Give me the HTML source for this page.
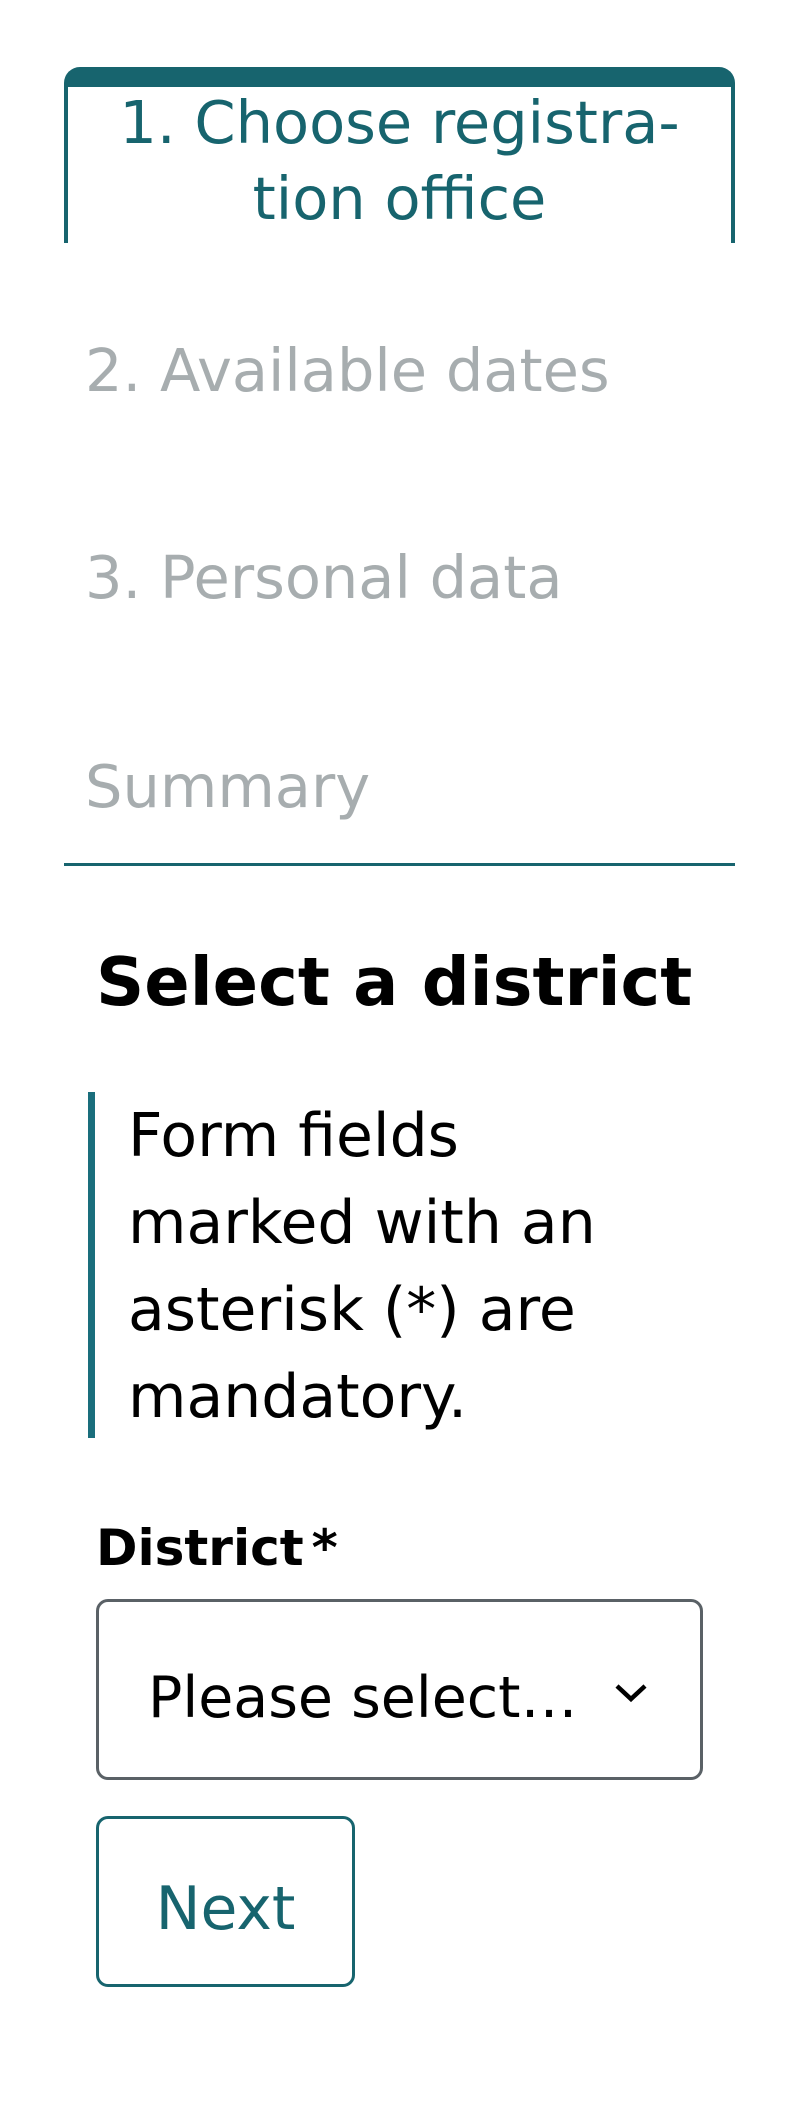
<!DOCTYPE html>
<html><head><meta charset="utf-8"><style>
*{margin:0;padding:0;box-sizing:border-box}
html,body{width:800px;height:2103px;background:#fff;overflow:hidden}
body{font-family:"DejaVu Sans","Liberation Sans",sans-serif;position:relative}
.a{position:absolute;white-space:nowrap}
.tab{position:absolute;left:64px;top:67px;width:671px;height:176px;border:4px solid #17646e;border-top:20px solid #17646e;border-bottom:none;border-radius:16px 16px 0 0}
.tt{position:absolute;left:64px;width:671px;text-align:center;color:#17646e;font-size:59px;line-height:76px}
.g{color:#a7adaf;font-size:59px;line-height:60px;left:85px}
</style></head><body>
<div class="tab"></div>
<div class="tt" style="top:85px">1. Choose registra-</div>
<div class="tt" style="top:161px">tion office</div>
<div class="a g" style="top:341px">2. Available dates</div>
<div class="a g" style="top:548px">3. Personal data</div>
<div class="a g" style="top:757px">Summary</div>
<div class="a" style="left:64px;top:863px;width:671px;height:3px;background:#17646e"></div>
<div class="a" style="left:96px;top:942px;font-size:67px;font-weight:bold;line-height:80px;color:#000">Select a district</div>
<div class="a" style="left:88px;top:1092px;width:7px;height:346px;background:#1a6e7c"></div>
<div class="a" style="left:128px;top:1093px;font-size:60px;line-height:87px;color:#000">Form fields<br>marked with an<br>asterisk (*) are<br>mandatory.</div>
<div class="a" style="left:96px;top:1518px;font-size:50px;font-weight:bold;line-height:60px;color:#000">District<span style="margin-left:8px">*</span></div>
<div class="a" style="left:96px;top:1599px;width:607px;height:181px;border:3px solid #5a6166;border-radius:12px"></div>
<div class="a" style="left:148px;top:1663px;font-size:57px;line-height:70px;color:#000">Please select…</div>
<svg class="a" style="left:612px;top:1678px" width="38" height="28" viewBox="0 0 38 28"><path d="M5 8 L19 21 L33 8" fill="none" stroke="#000" stroke-width="4.5"/></svg>
<div class="a" style="left:96px;top:1816px;width:259px;height:171px;border:3px solid #17646e;border-radius:12px"></div>
<div class="a" style="left:96px;top:1874px;width:259px;text-align:center;font-size:60px;line-height:70px;color:#17646e">Next</div>
</body></html>
